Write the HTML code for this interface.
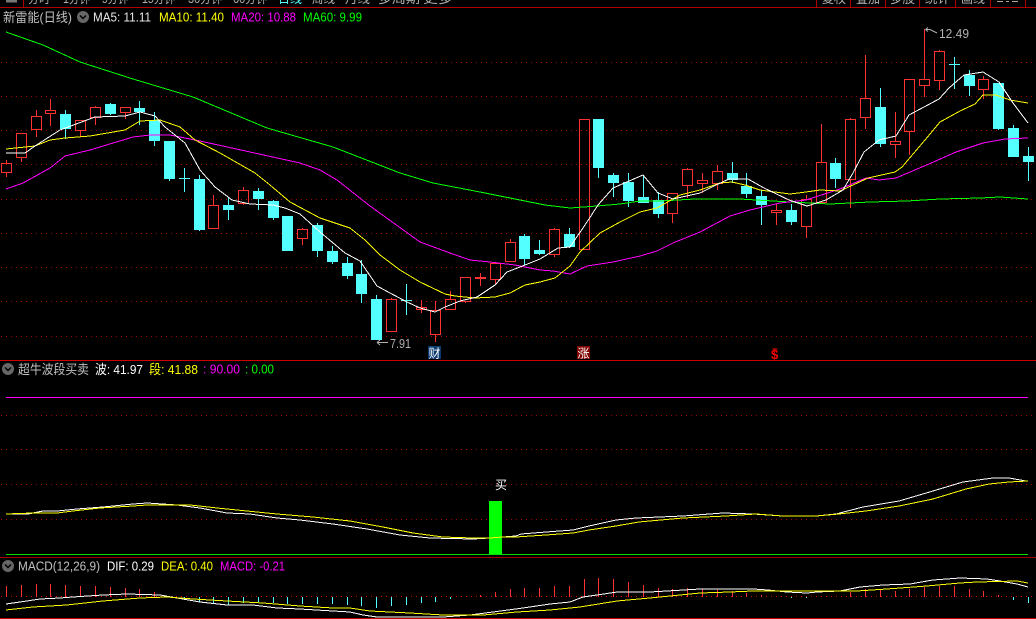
<!DOCTYPE html>
<html><head><meta charset="utf-8"><style>
html,body{margin:0;padding:0;background:#000;width:1036px;height:619px;overflow:hidden}
svg{display:block;position:absolute;left:0;top:0}
text{font-family:"Liberation Sans","WenQuanYi Zen Hei","Noto Sans CJK SC",sans-serif;font-size:13px}
.l{fill:none;stroke-width:1;shape-rendering:crispEdges}
</style></head><body>
<svg width="1036" height="619" viewBox="0 0 1036 619">
<rect width="1036" height="619" fill="#000"/>
<g fill="#b0b0b0">
<text x="28" y="3" textLength="22" lengthAdjust="spacingAndGlyphs">分时</text><text x="63" y="3" textLength="27" lengthAdjust="spacingAndGlyphs">1分钟</text><text x="102" y="3" textLength="26" lengthAdjust="spacingAndGlyphs">5分钟</text><text x="142" y="3" textLength="33" lengthAdjust="spacingAndGlyphs">15分钟</text><text x="188" y="3" textLength="34" lengthAdjust="spacingAndGlyphs">30分钟</text><text x="233" y="3" textLength="34" lengthAdjust="spacingAndGlyphs">60分钟</text><text x="278" y="3" textLength="24" fill="#54ffff" lengthAdjust="spacingAndGlyphs">日线</text><text x="312" y="3" textLength="23" lengthAdjust="spacingAndGlyphs">周线</text><text x="345" y="3" textLength="25" lengthAdjust="spacingAndGlyphs">月线</text><text x="378" y="3" textLength="42" lengthAdjust="spacingAndGlyphs">多周期</text><text x="423" y="3" textLength="30" lengthAdjust="spacingAndGlyphs">更多</text>
<text x="822" y="3" textLength="24" lengthAdjust="spacingAndGlyphs">复权</text><text x="856" y="3" textLength="24" lengthAdjust="spacingAndGlyphs">叠加</text><text x="890" y="3" textLength="25" lengthAdjust="spacingAndGlyphs">多股</text><text x="925" y="3" textLength="25" lengthAdjust="spacingAndGlyphs">统计</text><text x="961" y="3" textLength="24" lengthAdjust="spacingAndGlyphs">画线</text>
</g>
<path d="M6 0V2.500H17V0" fill="#777"/>
<path d="M997 1.500H1003M1006 1.500H1009M1012 1.500H1018" stroke="#aaa" class="l"/>
<path d="M23.500 0V7M816.500 0V7M850.500 0V7M885.500 0V7M919.500 0V7M955.500 0V7M990.500 0V7M1025.500 0V7" stroke="#b00000" class="l"/>
<path d="M0 7.500H1036" stroke="#b00000" class="l"/>
<g stroke="#a00000" fill="none" stroke-dasharray="1 4" shape-rendering="crispEdges">
<path d="M1 62.500H1036M1 96.500H1036M1 130.500H1036M1 164.500H1036M1 199.500H1036M1 233.500H1036M1 267.500H1036M1 301.500H1036M1 336.500H1036"/>
<path d="M1 415.500H1036M1 449.500H1036M1 484.500H1036M1 519.500H1036"/>
<path d="M1 596.500H1036" stroke="#d00000"/>
</g>
<path class="l" stroke="#54ffff" d="M65.500 110V139M110.500 103V115M139.500 101V125M154.500 112V146M169.500 141V181M179 178.500H190M184.500 168V192M199.500 175V231M228.500 197V220M258.500 188V210M273.500 200V220M317.500 223V257M332.500 246V264M347.500 257V279M361.500 260V303M376.500 295V340M401 300.500H412M406.500 284V315M524.500 234V265M539.500 240V255M569.500 228V248M598.500 119V178M613.500 173V197M628.500 173V207M643.500 175V203M658.500 192V218M732.500 162V183M746.500 173V198M761.500 190V225M791.500 204V225M835.500 158V188M880.500 88V147M949 64.500H960M954.500 57V89M969.500 70V96M998.500 83V130M1013.500 125V157M1028.500 147V181"/>
<path fill="#54ffff" shape-rendering="crispEdges" d="M60 114H71V129H60ZM105 104H116V114H105ZM134 108H145V112H134ZM149 120H160V141H149ZM164 141H175V179H164ZM194 179H205V230H194ZM223 205H234V210H223ZM253 191H264V199H253ZM268 201H279V218H268ZM282 216H293V251H282ZM312 225H323V251H312ZM327 251H338V262H327ZM342 263H353V276H342ZM356 274H367V294H356ZM371 299H382V340H371ZM519 236H530V259H519ZM534 250H545V254H534ZM564 234H575V247H564ZM593 119H604V168H593ZM608 175H619V183H608ZM623 182H634V201H623ZM638 197H649V203H638ZM653 200H664V214H653ZM727 173H738V180H727ZM741 186H752V194H741ZM756 196H767V205H756ZM786 210H797V222H786ZM830 163H841V179H830ZM875 107H886V144H875ZM964 75H975V86H964ZM993 83H1004V129H993ZM1008 128H1019V157H1008ZM1023 156H1034V162H1023Z"/>
<path class="l" stroke="#ff3232" d="M1.500 163.500H11.500V172.500H1.500ZM6.500 160V163M6.500 173V177M16.500 133.500H26.500V157.500H16.500ZM21.500 158V162M31.500 116.500H41.500V129.500H31.500ZM36.500 110V116M36.500 130V137M45.500 110.500H55.500V113.500H45.500ZM50.500 99V110M50.500 114V126M75.500 120.500H85.500V130.500H75.500ZM80.500 131V137M90.500 107.500H100.500V117.500H90.500ZM95.500 106V107M95.500 118V125M120.500 107.500H130.500V112.500H120.500ZM125.500 113V119M208.500 205.500H218.500V228.500H208.500ZM213.500 195V205M238.500 190.500H248.500V203.500H238.500ZM243.500 187V190M243.500 204V205M297.500 229.500H307.500V238.500H297.500ZM302.500 228V229M302.500 239V245M386.500 299.500H396.500V331.500H386.500ZM391.500 298V299M416.500 307.500H426.500V309.500H416.500ZM421.500 300V307M421.500 310V313M430.500 310.500H440.500V334.500H430.500ZM435.500 301V310M435.500 335V342M445.500 299.500H455.500V309.500H445.500ZM450.500 291V299M460.500 277.500H470.500V301.500H460.500ZM465.500 302V303M475 277.500H486M475 278.500H486M480.500 273V286M490.500 263.500H500.500V279.500H490.500ZM495.500 262V263M495.500 280V285M505.500 242.500H515.500V261.500H505.500ZM510.500 239V242M549.500 229.500H559.500V254.500H549.500ZM554.500 228V229M554.500 255V257M579.500 119.500H589.500V249.500H579.500ZM667.500 193.500H677.500V213.500H667.500ZM672.500 214V223M682.500 169.500H692.500V185.500H682.500ZM687.500 168V169M687.500 186V198M697.500 180.500H707.500V183.500H697.500ZM702.500 173V180M702.500 184V193M712.500 171.500H722.500V183.500H712.500ZM717.500 165V171M717.500 184V190M771.500 210.500H781.500V212.500H771.500ZM776.500 204V210M776.500 213V225M801.500 199.500H811.500V226.500H801.500ZM806.500 195V199M806.500 227V238M816.500 162.500H826.500V202.500H816.500ZM821.500 124V162M845.500 119.500H855.500V179.500H845.500ZM850.500 118V119M850.500 180V208M860.500 98.500H870.500V117.500H860.500ZM865.500 55V98M865.500 118V129M890.500 141.500H900.500V144.500H890.500ZM895.500 112V141M895.500 145V158M904.500 79.500H914.500V131.500H904.500ZM909.500 132V155M919.500 79.500H929.500V85.500H919.500ZM924.500 29V79M924.500 86V97M934.500 51.500H944.500V80.500H934.500ZM939.500 50V51M939.500 81V90M978.500 79.500H988.500V89.500H978.500ZM983.500 76V79M983.500 90V99"/>
<polyline class="l" stroke="#00ff00" points="6,32 43,45 80,62 133,79 193,97 267,128 333,147 400,173 433,183 480,192 520,200 545,205 570,208 597,206 620,204 640,201 660,201 695,199 740,199 773,201 790,202 830,204 870,202 907,201 940,199 980,198 1000,197 1028,199"/>
<polyline class="l" stroke="#ff00ff" points="6,189 23,183 50,168 65,156 90,150 133,137 150,135 170,135 200,141 250,152 300,163 320,170 337,180 370,206 420,242 450,253 470,260 490,262 515,265 540,270 553,271 570,274 587,266 613,262 640,256 657,251 673,243 700,232 730,216 750,210 780,203 806,200 840,189 866,178 879,180 896,178 929,164 956,152 983,143 1005,139 1028,138"/>
<polyline class="l" stroke="#ffff00" points="6,149 35,146 50,140 65,138 90,136 125,130 140,121 160,120 180,127 195,140 220,153 255,173 270,185 290,202 320,218 350,228 365,240 380,255 400,270 420,282 445,294 455,296 475,298 495,297 510,293 525,285 540,282 555,278 570,266 580,252 600,233 620,222 640,212 657,208 680,195 700,190 720,183 732,182 745,185 760,190 790,194 806,192 820,190 840,191 868,178 895,172 902,167 925,140 940,122 960,111 975,104 983,95 996,95 1010,100 1028,103"/>
<polyline class="l" stroke="#ffffff" points="6,153 25,153 35,146 60,130 95,117 125,116 140,112 155,116 165,127 185,143 200,170 215,187 232,200 250,204 273,205 285,208 300,214 320,232 345,253 360,261 377,286 390,293 407,302 420,308 435,312 445,307 460,301 477,297 495,285 507,272 520,267 540,259 558,248 570,247 587,222 598,205 613,188 643,175 658,193 673,199 700,193 716,185 729,179 748,179 764,188 789,200 807,206 826,200 843,190 853,173 864,152 879,140 896,136 909,115 939,99 949,88 964,75 983,72 999,82 1013,103 1028,123"/>
<g>
<text x="3" y="22" textLength="69" fill="#c0c0c0" lengthAdjust="spacingAndGlyphs">新雷能(日线)</text>
<circle cx="83" cy="17" r="6" fill="#666"/><path d="M80 15.500L83 18.500L86 15.500" fill="none" stroke="#000" stroke-width="1.500"/>
<text x="93" y="21.500" textLength="58" fill="#e8e8e8" lengthAdjust="spacingAndGlyphs">MA5: 11.11</text>
<text x="159" y="21.500" textLength="65" fill="#ffff00" lengthAdjust="spacingAndGlyphs">MA10: 11.40</text>
<text x="231" y="21.500" textLength="65" fill="#ff00ff" lengthAdjust="spacingAndGlyphs">MA20: 10.88</text>
<text x="303" y="21.500" textLength="59" fill="#00ff00" lengthAdjust="spacingAndGlyphs">MA60: 9.99</text>
</g>
<text x="939" y="38" textLength="30" fill="#b0b0b0" lengthAdjust="spacingAndGlyphs">12.49</text>
<path d="M925.500 29.500L928 27.500M925.500 29.500L928 31.500M925.500 29.500H930L937 33" fill="none" stroke="#b0b0b0" stroke-width="1"/>
<text x="390" y="348" textLength="21" fill="#b0b0b0" lengthAdjust="spacingAndGlyphs">7.91</text>
<path d="M377 342.500L380 340M377 342.500L380 345M377 342.500H388" fill="none" stroke="#b0b0b0" stroke-width="1"/>
<rect x="428" y="346" width="13" height="13" fill="#0a3a6e"/><text x="428.500" y="357.500" style="font-size:12px" fill="#fff">财</text>
<rect x="577" y="346" width="13" height="13" fill="#800000"/><text x="577.500" y="357.500" style="font-size:12px" fill="#fff">涨</text>
<text x="771" y="359" style="font-size:13px;font-weight:bold" fill="#ff0000" textLength="8">$</text>
<path d="M772.500 349H777.500" stroke="#f00" class="l"/>
<path d="M0 360.500H1036" stroke="#d00000" class="l"/>
<circle cx="8" cy="369" r="6" fill="#666"/><path d="M5 367.500L8 370.500L11 367.500" fill="none" stroke="#000" stroke-width="1.500"/>
<text x="18" y="374" textLength="71" fill="#c0c0c0" lengthAdjust="spacingAndGlyphs">超牛波段买卖</text>
<text x="95" y="374" textLength="48" fill="#ffffff" lengthAdjust="spacingAndGlyphs">波: 41.97</text>
<text x="149" y="374" textLength="49" fill="#ffff00" lengthAdjust="spacingAndGlyphs">段: 41.88</text>
<text x="203" y="373.500" textLength="37" fill="#ff00ff" lengthAdjust="spacingAndGlyphs">: 90.00</text>
<text x="245" y="373.500" textLength="29" fill="#00ff00" lengthAdjust="spacingAndGlyphs">: 0.00</text>
<path d="M6 397.500H1028" stroke="#ff00ff" class="l"/>
<path d="M6 554.500H1028" stroke="#00e000" class="l"/>
<rect x="489" y="501" width="13" height="53" fill="#00ff00"/>
<text x="495" y="489" style="font-size:12px" fill="#fff">买</text>
<polyline class="l" stroke="#ffffff" points="6,514 28,514 43,511 57,511 77,509 103,507 133,504 147,503 177,505 200,508 227,513 250,514 277,518 300,520 333,524 367,529 400,535 430,538 473,539 490,538 503,537 516,536 521,534 546,532 573,530 589,526 616,520 636,518 683,516 723,513 753,514 783,516 816,516 836,514 863,507 899,501 933,491 963,482 993,478 1009,478 1026,481"/>
<polyline class="l" stroke="#ffff00" points="6,514 33,513 57,513 73,511 100,508 133,506 147,505 190,505 217,508 247,511 277,514 313,517 350,521 383,527 413,533 443,537 473,538 490,538 503,537 516,537 546,535 573,533 589,530 616,526 639,522 683,518 726,516 756,514 783,516 816,516 839,514 866,511 899,506 933,499 966,489 989,484 1009,482 1028,481"/>
<path d="M0 557.500H1036" stroke="#a00000" class="l"/>
<circle cx="8" cy="566" r="6" fill="#666"/><path d="M5 564.500L8 567.500L11 564.500" fill="none" stroke="#000" stroke-width="1.500"/>
<text x="18" y="570.500" textLength="82" fill="#c0c0c0" lengthAdjust="spacingAndGlyphs">MACD(12,26,9)</text>
<text x="107" y="570.500" textLength="47" fill="#ffffff" lengthAdjust="spacingAndGlyphs">DIF: 0.29</text>
<text x="161" y="570.500" textLength="52" fill="#ffff00" lengthAdjust="spacingAndGlyphs">DEA: 0.40</text>
<text x="220" y="570.500" textLength="65" fill="#ff00ff" lengthAdjust="spacingAndGlyphs">MACD: -0.21</text>
<path class="l" stroke="#ff3232" d="M6.500 586V597M21.500 585V597M36.500 584V597M50.500 584V597M65.500 585V597M80.500 586V597M95.500 586V597M110.500 587V597M125.500 588V597M139.500 589V597M154.500 592V597M480.500 595V597M495.500 592V597M510.500 589V597M524.500 588V597M539.500 588V597M554.500 586V597M569.500 586V597M584.500 579V597M598.500 578V597M613.500 579V597M628.500 582V597M643.500 585V597M658.500 588V597M672.500 589V597M687.500 588V597M702.500 589V597M717.500 590V597M732.500 591V597M746.500 593V597M761.500 595V597M850.500 592V597M865.500 589V597M880.500 590V597M895.500 591V597M909.500 589V597M924.500 587V597M939.500 586V597M954.500 586V597M969.500 589V597M983.500 591V597M998.500 595V597"/>
<path class="l" stroke="#54ffff" d="M184.500 597V598M199.500 597V602M213.500 597V603M228.500 597V605M243.500 597V603M258.500 597V602M273.500 597V603M287.500 597V604M302.500 597V604M317.500 597V604M332.500 597V604M347.500 597V605M361.500 597V606M376.500 597V608M391.500 597V606M406.500 597V605M421.500 597V603M435.500 597V602M450.500 597V599M791.500 597V598M806.500 597V598M1013.500 597V600M1028.500 597V603"/>
<polyline class="l" stroke="#ffffff" points="6,604 20,602 40,599 60,598 73,597 103,595 127,594 160,595 177,598 200,602 227,605 253,605 277,608 300,609 333,611 350,612 363,615 377,617 443,617 457,616 470,615 493,612 523,608 550,604 570,602 583,597 597,595 617,592 650,592 667,591 700,589 753,589 768,590 787,592 807,593 817,592 840,591 860,587 883,585 910,584 933,580 960,578 987,579 1000,581 1017,584 1028,587"/>
<polyline class="l" stroke="#ffff00" points="6,610 33,607 67,605 103,601 140,598 167,597 193,599 227,601 263,603 300,606 333,608 350,608 370,611 410,613 443,615 483,615 517,612 550,610 580,607 617,601 650,598 700,593 730,592 753,591 833,591 857,591 887,589 927,586 960,583 977,582 1017,581 1028,583"/>
<path d="M0 618.500H1036" stroke="#c00000" class="l"/>
</svg>
</body></html>
